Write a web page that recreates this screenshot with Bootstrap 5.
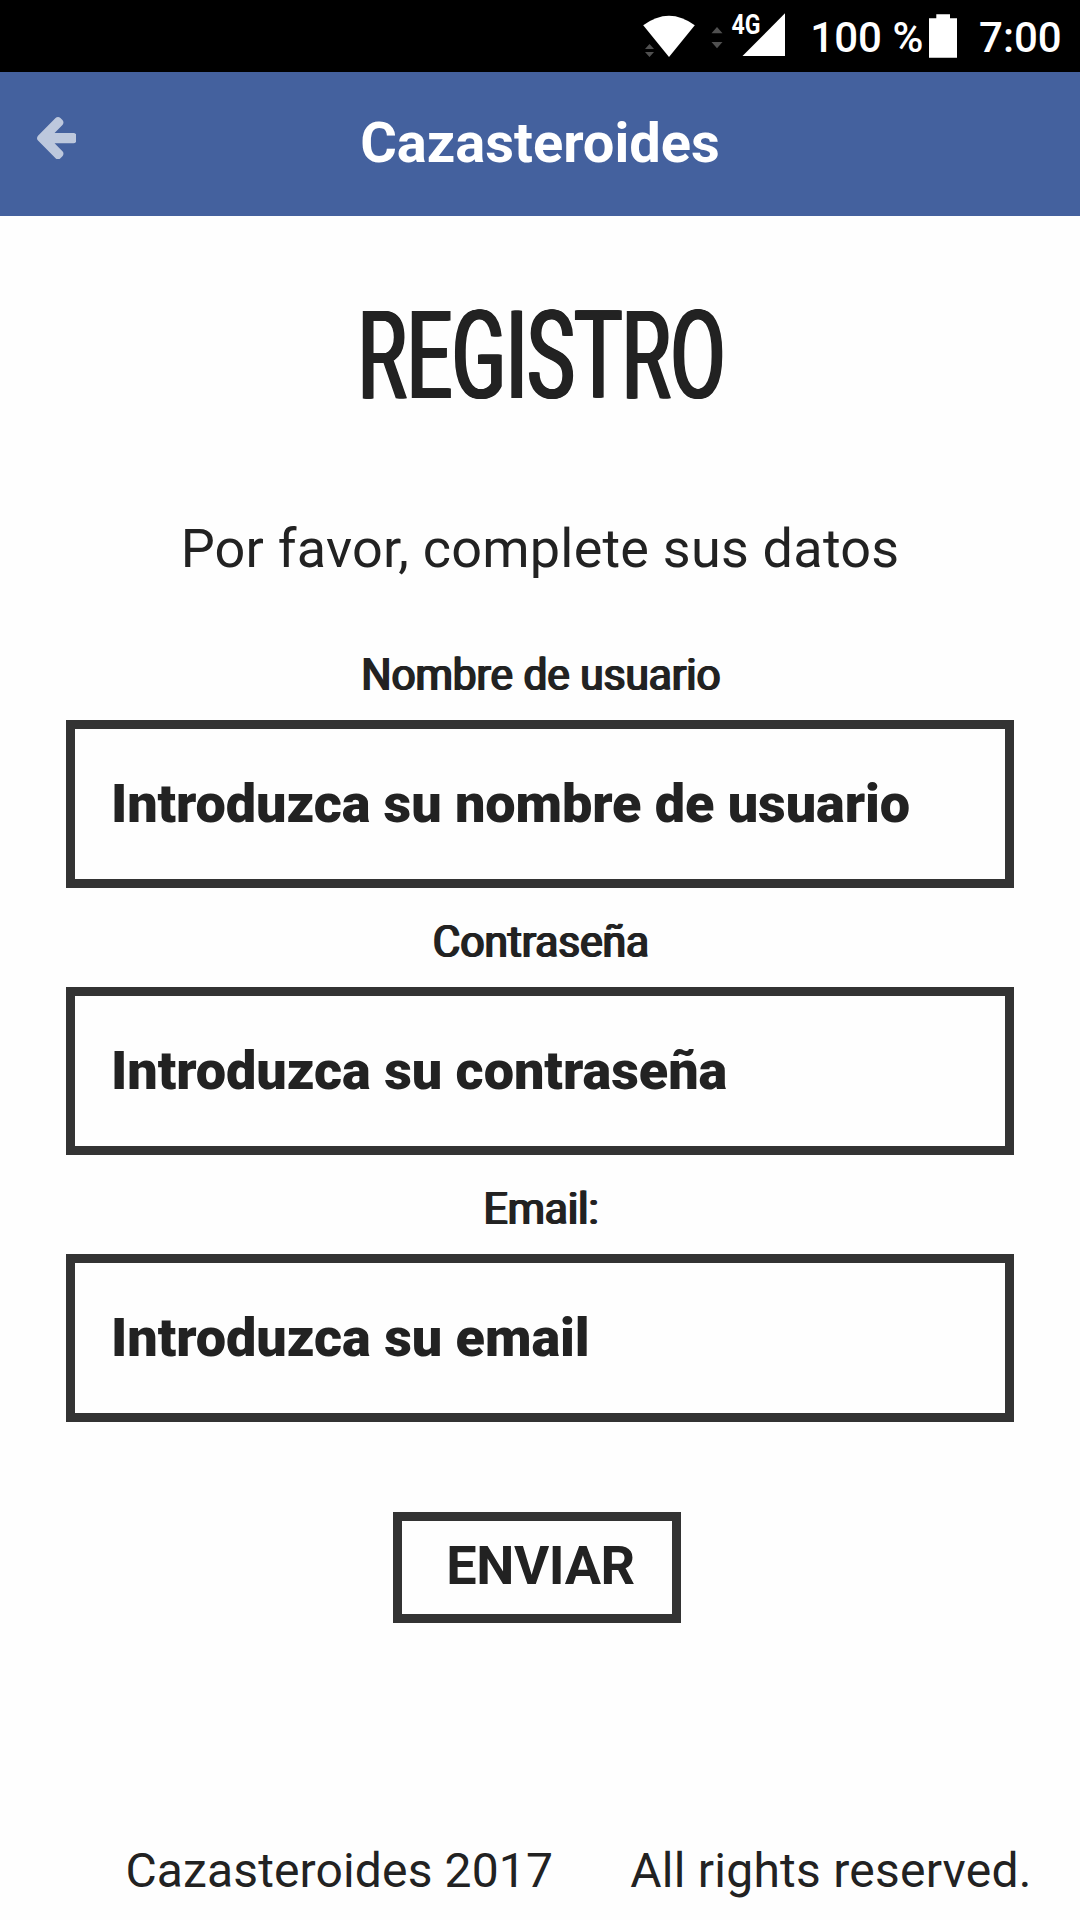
<!DOCTYPE html>
<html lang="es">
<head>
<meta charset="utf-8">
<meta name="viewport" content="width=device-width, initial-scale=1">
<title>Cazasteroides - Registro</title>
<link href="https://cdn.jsdelivr.net/npm/bootstrap@5.3.0/dist/css/bootstrap.min.css" rel="stylesheet">
<style>
body{font-family:Roboto,"Liberation Sans",sans-serif;color:#222;background:#fefefe}
.screen{height:1920px;overflow:hidden}
.status-bar{height:72px;background:#000;color:#fff;font-size:42px;font-weight:500;line-height:72px;padding-right:18.3px}
.status-bar span{padding-top:2px}
.status-bar svg{height:72px}
.status-bar .charge{margin-left:22.3px}
.status-bar .cell{margin-left:2.7px}
.status-bar .clock{margin-left:19px}
.app-bar{height:144px;background:#44619e}
.back-link{padding:0 0 12px 36.5px;line-height:0;opacity:.65}
.app-title{font-size:56px;font-weight:700;line-height:142px;color:#fff}
.page-title{font-size:122px;font-weight:400;line-height:140px;padding:71px 0 0 4px}
.page-title span{transform:scaleX(.65);text-shadow:-2.5px 0 #222,-1.2px 0 #222,1.2px 0 #222,2.5px 0 #222}
.intro{font-size:54px;line-height:64px;letter-spacing:.22px;margin-top:90px}
.reg-form{width:948px;margin-top:40px}
.reg-form .form-label{font-size:45px;line-height:60px;padding:24px 0 15px 2px}
.reg-form .form-label span{transform:scaleX(.941);text-shadow:-1.1px 0 #222,1.1px 0 #222}
.reg-form .form-control{height:168px;border:9px solid #333;padding:0 36px 2px;font-size:54px;font-weight:900;letter-spacing:-.05px;background:#fefefe}
.reg-form #user{letter-spacing:-.1px}
.reg-form .form-control::placeholder{color:#222;opacity:1}
.send-btn{width:288px;height:111px;border:9px solid #333;padding:0 0 4px 8px;font-size:54px;font-weight:700;line-height:80px;letter-spacing:-.4px;color:#222;background:#fefefe;margin:90px 0 0 -7px}
.foot{font-size:48px;line-height:60px;padding:0 0 19px 125.5px}
.foot .owner{width:504.8px;letter-spacing:.13px}
.foot .rights{letter-spacing:.24px}
</style>
</head>
<body>
<div class="screen d-flex flex-column">
  <div class="status-bar d-flex justify-content-end flex-shrink-0">
    <svg width="60" viewBox="640 0 60 72"><path fill="#fff" d="M643.2 25.3Q669 6.200 694.800 25.300L669 57Z"/><path fill="#505050" d="M645 49L649.500 44L654 49ZM645 52H654L649.500 57Z"/></svg>
    <svg width="88" viewBox="700 0 88 72"><path fill="#505050" d="M711.500 33.200L717 27L722.500 33.200ZM711.500 42H722.500L717 48.200Z"/><path fill="#fff" d="M785 13.300V56H742.500Z"/><text x="731.500" y="33.700" font-size="27" font-weight="700" fill="#fff" textLength="29" lengthAdjust="spacingAndGlyphs">4G</text></svg>
    <span class="charge">100 %</span>
    <svg class="cell" width="34" viewBox="926 0 34 72"><path fill="#fff" d="M936.300 14.300H950V18.300H957V57.800H929V18.300H936.300Z"/></svg>
    <span class="clock">7:00</span>
  </div>
  <nav class="app-bar d-flex flex-shrink-0">
    <div class="flex-fill w-25 d-flex align-items-center">
      <a href="#" class="back-link" aria-label="Volver"><svg width="39.7" height="42.3" viewBox="64 181 1472 1558" preserveAspectRatio="none"><path fill="#fff" d="M1536 896v128q0 53-32.500 90.500t-84.500 37.500h-704l293 294q38 36 38 90t-38 90l-75 76q-37 37-90 37-52 0-91-37l-651-652q-37-37-37-90 0-52 37-91l651-650q38-38 91-38 52 0 90 38l75 74q38 38 38 91t-38 91l-293 293h704q52 0 84.500 37.500t32.500 90.500z"/></svg></a>
    </div>
    <div class="app-title">Cazasteroides</div>
    <div class="flex-fill w-25"></div>
  </nav>
  <main class="d-flex flex-column align-items-center">
    <h1 class="page-title m-0"><span class="d-inline-block">REGISTRO</span></h1>
    <p class="intro mb-0">Por favor, complete sus datos</p>
    <form class="reg-form text-center">
      <label class="form-label d-block m-0" for="user"><span class="d-inline-block">Nombre de usuario</span></label>
      <input class="form-control rounded-0" id="user" type="text" placeholder="Introduzca su nombre de usuario">
      <label class="form-label d-block m-0" for="pass"><span class="d-inline-block">Contraseña</span></label>
      <input class="form-control rounded-0" id="pass" type="password" placeholder="Introduzca su contraseña">
      <label class="form-label d-block m-0" for="mail"><span class="d-inline-block">Email:</span></label>
      <input class="form-control rounded-0" id="mail" type="email" placeholder="Introduzca su email">
      <button class="btn send-btn rounded-0" type="button">ENVIAR</button>
    </form>
  </main>
  <footer class="foot d-flex mt-auto text-nowrap">
    <span class="owner">Cazasteroides 2017</span>
    <span class="rights">All rights reserved.</span>
  </footer>
</div>
<script src="https://cdn.jsdelivr.net/npm/bootstrap@5.3.0/dist/js/bootstrap.bundle.min.js"></script>
</body>
</html>
